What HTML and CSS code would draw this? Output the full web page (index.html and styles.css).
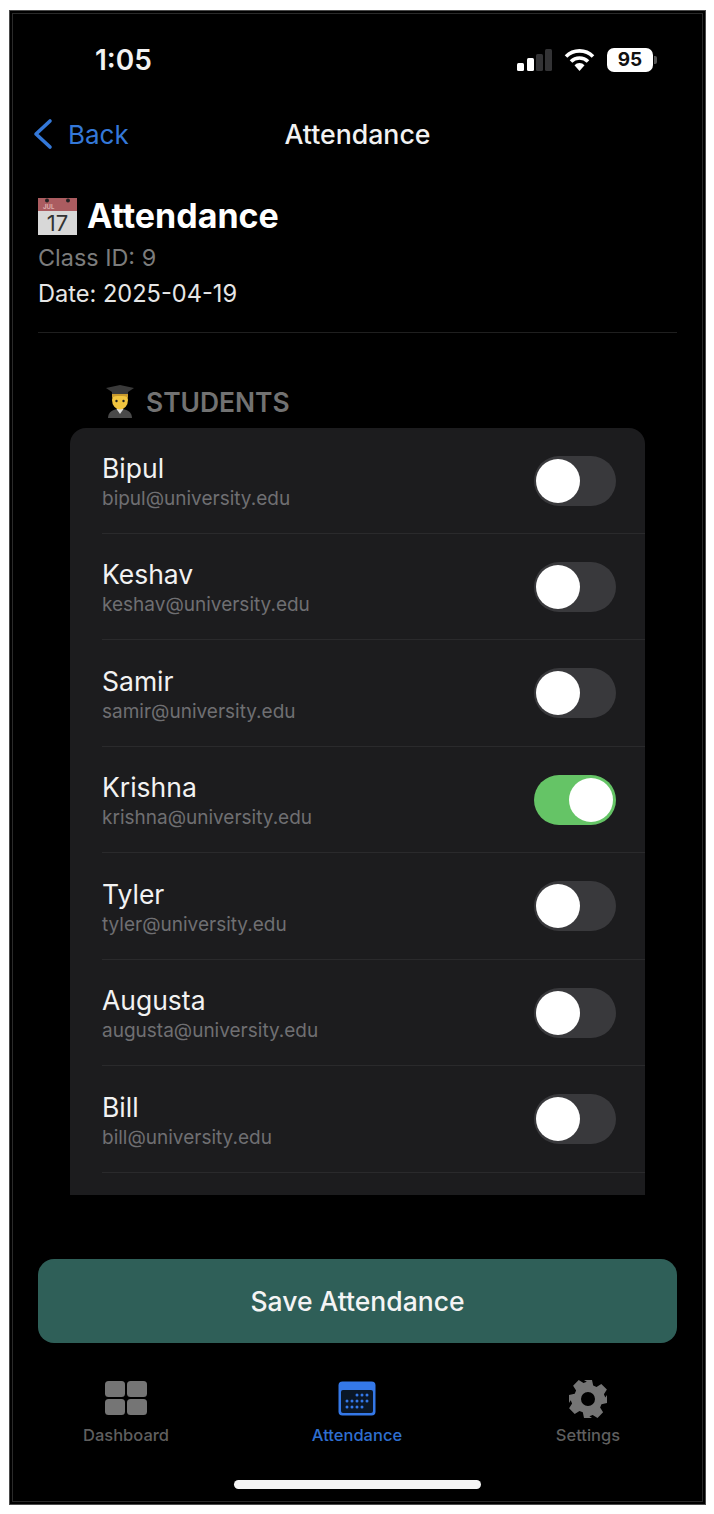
FILE: index.html
```html
<!DOCTYPE html>
<html lang="en">
<head>
<meta charset="utf-8">
<title>Attendance</title>
<link rel="stylesheet" href="styles.css">
</head>
<body>
<div class="frame">
  <div class="screen">
    <div class="status">
      <span class="time">1:05</span>
      <div class="status-icons">
        <svg class="signal" width="35" height="23" viewBox="0 0 35 23"><rect x="0" y="14" width="7" height="8" rx="1.500" fill="#fff"/><rect x="10" y="9" width="7" height="13" rx="1.500" fill="#fff"/><rect x="19" y="5" width="7" height="17" rx="1.500" fill="#333335"/><rect x="28" y="0" width="7" height="22" rx="1.500" fill="#333335"/></svg>
        <svg class="wifi" width="31" height="23" viewBox="0 0 31 23"><path d="M2 7.500a19 19 0 0 1 27 0M7 12.500a12 12 0 0 1 17 0" fill="none" stroke="#fff" stroke-width="3.600"/><path d="M10.500 16.200a7 7 0 0 1 10 0L15.500 22z" fill="#fff"/></svg>
        <div class="battery"><span class="battery-body">95</span><span class="battery-cap"></span></div>
      </div>
    </div>
    <div class="nav">
      <div class="back">
        <svg width="21" height="32" viewBox="0 0 21 32"><path d="M18 3 4 16l14 13" fill="none" stroke="#3478d8" stroke-width="3.600" stroke-linecap="round" stroke-linejoin="round"/></svg>
        <span>Back</span>
      </div>
      <span class="nav-title">Attendance</span>
    </div>
    <div class="header">
      <h1 class="title">
        <svg class="cal-emoji" width="39" height="39" viewBox="0 0 39 39"><rect y="1" width="39" height="37" fill="#d8d8d8"/><rect y="1" width="39" height="13" fill="#ab5c60"/><circle cx="9" cy="3.500" r="2" fill="#222"/><circle cx="30" cy="3.500" r="2" fill="#222"/><text x="19.500" y="34" text-anchor="middle" class="cal-day">17</text><text x="5" y="12" class="cal-month">JUL</text></svg>
        <span>Attendance</span>
      </h1>
      <div class="class-id">Class ID: 9</div>
      <div class="date">Date: 2025-04-19</div>
    </div>
    <div class="rule"></div>
    <div class="section">
      <svg class="student-emoji" width="30" height="34" viewBox="0 0 30 34"><path d="M3 33c0-6 5-9 12-9s12 3 12 9z" fill="#4a4a4a"/><path d="M11.500 24l3.500 5 3.500-5z" fill="#e0e0e0"/><ellipse cx="15" cy="15" rx="8" ry="9.500" fill="#f2c53f"/><path d="M7 8h16v5c-2-2-4-2-8-2s-6 0-8 2z" fill="#c99a2e"/><path d="M1 3 15 0l14 3-6 4v2H7V7z" fill="#3a3a3a"/><circle cx="11.500" cy="16" r="1.200" fill="#222"/><circle cx="18.500" cy="16" r="1.200" fill="#222"/></svg>
      <span>STUDENTS</span>
    </div>
    <div class="card">
      <div class="row"><div class="who"><div class="name">Bipul</div><div class="email">bipul@university.edu</div></div><div class="switch"><span class="knob"></span></div></div>
      <div class="row"><div class="who"><div class="name">Keshav</div><div class="email">keshav@university.edu</div></div><div class="switch"><span class="knob"></span></div></div>
      <div class="row"><div class="who"><div class="name">Samir</div><div class="email">samir@university.edu</div></div><div class="switch"><span class="knob"></span></div></div>
      <div class="row"><div class="who"><div class="name">Krishna</div><div class="email">krishna@university.edu</div></div><div class="switch on"><span class="knob"></span></div></div>
      <div class="row"><div class="who"><div class="name">Tyler</div><div class="email">tyler@university.edu</div></div><div class="switch"><span class="knob"></span></div></div>
      <div class="row"><div class="who"><div class="name">Augusta</div><div class="email">augusta@university.edu</div></div><div class="switch"><span class="knob"></span></div></div>
      <div class="row"><div class="who"><div class="name">Bill</div><div class="email">bill@university.edu</div></div><div class="switch"><span class="knob"></span></div></div>
    </div>
    <div class="save">Save Attendance</div>
    <div class="tabs">
      <div class="tab">
        <svg width="42" height="36" viewBox="0 0 42 36"><rect width="20" height="16" rx="3.500" fill="#757575"/><rect x="22" width="20" height="16" rx="3.500" fill="#757575"/><rect y="18" width="20" height="16" rx="3.500" fill="#757575"/><rect x="22" y="18" width="20" height="16" rx="3.500" fill="#757575"/></svg>
        <span>Dashboard</span>
      </div>
      <div class="tab active">
        <svg width="38" height="36" viewBox="0 0 38 36"><rect x="0.500" y="0.500" width="37" height="34" rx="4" fill="#3478e8"/><rect x="3" y="9" width="32" height="23" rx="2" fill="#0a1626"/><g fill="#3478e8"><circle cx="19" cy="14" r="1.500"/><circle cx="24" cy="14" r="1.500"/><circle cx="29" cy="14" r="1.500"/><circle cx="9" cy="20" r="1.500"/><circle cx="14" cy="20" r="1.500"/><circle cx="19" cy="20" r="1.500"/><circle cx="24" cy="20" r="1.500"/><circle cx="29" cy="20" r="1.500"/><circle cx="9" cy="26" r="1.500"/><circle cx="14" cy="26" r="1.500"/><circle cx="19" cy="26" r="1.500"/><circle cx="24" cy="26" r="1.500"/></g></svg>
        <span>Attendance</span>
      </div>
      <div class="tab">
        <svg class="gear" width="40" height="40" viewBox="0 0 40 40"><path fill="#757575" fill-rule="evenodd" d="M16 1h8l1.200 5.500 3.300 1.400 4.800-3 5.600 5.600-3 4.800 1.400 3.300L39 16v8l-5.500 1.200-1.400 3.300 3 4.800-5.600 5.600-4.800-3-3.300 1.400L24 39h-8l-1.200-5.700-3.300-1.400-4.800 3-5.600-5.600 3-4.800-1.400-3.300L1 24v-8l5.700-1.200 1.400-3.300-3-4.800 5.600-5.600 4.800 3 3.300-1.400zM20 13a7 7 0 1 0 0 14 7 7 0 0 0 0-14z"/></svg>
        <span>Settings</span>
      </div>
    </div>
    <div class="home-wrap"><div class="home"></div></div>
  </div>
</div>
</body>
</html>
```
FILE: styles.css
```css
* { box-sizing: border-box; }
html, body { margin: 0; padding: 0; background: #fff; }
body { width: 714px; height: 1514px; padding: 10px 8px 9px 9px; font-family: "Inter", "Liberation Sans", sans-serif; }
.frame { width: 697px; height: 1495px; background: #000; border: 1px solid #4a4a4a; padding: 2px; }
.screen { height: 100%; border: 1px solid #2a2a2a; background: #000; color: #fff; padding: 0 25px 0 25px; display: flex; flex-direction: column; }
.status { height: 60px; margin-top: 16px; margin-bottom: 14px; display: flex; justify-content: space-between; align-items: center; padding-left: 57px; padding-right: 20px; }
.time { font-size: 28px; font-weight: 600; color: #f2f2f2; }
.status-icons { display: flex; align-items: center; gap: 12px; }
.battery { display: flex; align-items: center; }
.battery-body { width: 46px; height: 24px; border-radius: 7px; background: #fff; color: #111; font-size: 19px; font-weight: 700; text-align: center; line-height: 24px; }
.battery-cap { width: 3px; height: 8px; background: #555; border-radius: 0 2px 2px 0; margin-left: 1px; }
.nav { height: 60px; position: relative; display: flex; align-items: center; justify-content: center; margin: 0 -6px; }
.back { position: absolute; left: 0; top: 14px; display: flex; align-items: center; gap: 15px; font-size: 26px; color: #3478d8; }
.nav-title { font-size: 26.700px; font-weight: 500; color: #f2f2f2; }
.header { padding-top: 30px; }
.title { margin: 0; display: flex; align-items: center; gap: 10px; font-size: 34px; font-weight: 700; line-height: 44px; }
.cal-emoji { flex: none; }
.cal-day { font: 400 22px "Inter", sans-serif; fill: #333; }
.cal-month { font: 700 6px "Inter", sans-serif; fill: #dcb0b0; }
.class-id { font-size: 23.400px; color: #7c7c7c; line-height: 35px; margin-top: 2px; }
.date { font-size: 23.600px; color: #e6e6e6; line-height: 35px; margin-top: 1px; }
.rule { height: 1px; background: #1f1f1f; margin-top: 21px; }
.section { display: flex; align-items: center; gap: 11px; margin: 52px 0 0 67px; height: 34px; font-size: 26.400px; font-weight: 600; color: #727272; }
.card { margin: 9px 32px 0 32px; background: #1c1c1e; border-radius: 16px 16px 0 0; height: 767px; padding-left: 32px; }
.row { height: 106.500px; display: flex; align-items: center; justify-content: space-between; border-bottom: 1px solid #2a2a2c; padding: 1px 29px 0 0; }
.row:first-child { height: 105.500px; }
.who { display: flex; flex-direction: column; gap: 3px; padding-top: 2px; }
.name { font-size: 26.500px; font-weight: 400; color: #f2f2f2; line-height: 32px; }
.email { font-size: 19px; color: #6f6f72; line-height: 24px; }
.switch { width: 82px; height: 50px; border-radius: 25px; background: #39393c; position: relative; }
.knob { position: absolute; top: 3px; left: 2px; width: 44px; height: 44px; border-radius: 50%; background: #fff; }
.switch.on { background: #65c466; }
.switch.on .knob { left: 35px; }
.save { height: 84px; margin-top: 64px; border-radius: 16px; background: #2f5f58; display: flex; align-items: center; justify-content: center; font-size: 26.500px; font-weight: 500; color: #f4f4f4; }
.tabs { display: flex; margin: 34px -26px 0 -27px; justify-content: space-between; }
.tab { width: 230px; height: 68px; display: flex; flex-direction: column; align-items: center; justify-content: flex-end; gap: 8px; font-size: 16.500px; font-weight: 500; color: #5f5f5f; }
.tab.active { color: #2f6fd0; }
.gear { margin-bottom: -2px; }
.home-wrap { display: flex; justify-content: center; margin-top: 35px; }
.home { width: 247px; height: 9px; border-radius: 5px; background: #f5f5f5; }
```
